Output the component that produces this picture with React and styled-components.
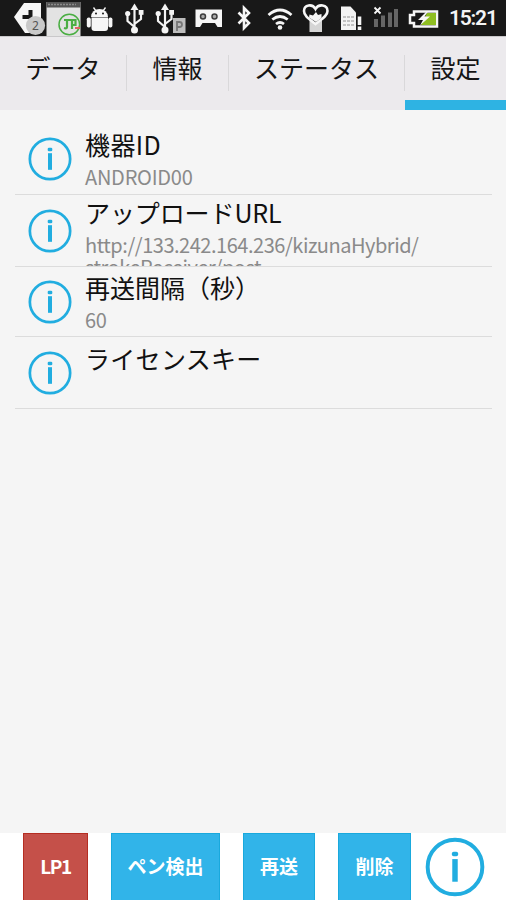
import React from 'react'
import styled, { createGlobalStyle } from 'styled-components'

const tabs = [
    { label: 'データ', width: 127 },
    { label: '情報', width: 102 },
    { label: 'ステータス', width: 176 },
    { label: '設定', width: 101, active: true },
]

const settings = [
    { title: '機器ID', value: 'ANDROID00', height: 72, top: 3, spacing: -0.25, titleSpacing: 0.4 },
    {
        title: 'アップロードURL',
        value: 'http://133.242.164.236/kizunaHybrid/ strokeReceiver/post',
        height: 72,
        top: -1,
        spacing: -0.47,
        titleSpacing: -0.1,
    },
    { title: '再送間隔（秒）', value: '60', height: 70, top: 2, spacing: -0.3, titleSpacing: 0 },
    { title: 'ライセンスキー', value: '', height: 72, top: 3, spacing: 0, titleSpacing: 0.3 },
]

const InfoIcon = ({ size, stroke }) => (
    <InfoSvg $size={size} viewBox="0 0 44 44">
        <circle
            cx="22"
            cy="22"
            r={21.5 - stroke / 2}
            fill="none"
            stroke="#21ade0"
            strokeWidth={stroke}
        />
        <rect x="19.7" y="10.8" width="4.6" height="3.4" rx="1.3" fill="#21ade0" />
        <rect x="20" y="16.2" width="4" height="16.6" fill="#21ade0" />
    </InfoSvg>
)

const UsbPath = () => (
    <g fill="none" stroke="#f4f4f4" strokeWidth="2.2">
        <path d="M10 7v21M10 26l-7-6v-6M10 23l6.5-5v-5" />
        <g fill="#f4f4f4" stroke="none">
            <path d="M10 2.5l4 6.5H6z" />
            <circle cx="3.2" cy="12.5" r="2.6" />
            <rect x="14.2" y="9" width="4.8" height="4.8" />
            <circle cx="10" cy="29" r="3.5" />
        </g>
    </g>
)

const StatusIcons = () => (
    <IconStrip viewBox="0 0 440 36">
        {/* 矢印と通知件数 */}
        <path d="M24 3h17v30H25L14 17z" fill="#f6f6f6" />
        <path d="M28.5 10h4v9h-10v-4h6z" fill="#181818" />
        <circle cx="35.5" cy="25.5" r="9.6" fill="#c9c9c9" />
        <text x="35.5" y="30" textAnchor="middle" fontSize="12" fill="#555">
            2
        </text>
        {/* アプリのサムネイル */}
        <rect x="46.5" y="2" width="34" height="34" fill="#e3e3e3" />
        <rect x="46.5" y="2" width="34" height="5.5" fill="#555" />
        <path d="M48 4.5h28" stroke="#8b8b8b" strokeWidth="1.4" strokeDasharray="2 1" />
        <g fill="none" stroke="#4aae43">
            <circle cx="69.3" cy="24.5" r="10.3" strokeWidth="1.5" />
            <path d="M67 20v7q0 2-3 1M72 29V20h3.5v5h-3M64 20h8" strokeWidth="2.2" />
        </g>
        <path d="M75 28h5" stroke="#df6262" strokeWidth="2" />
        {/* ドロイド */}
        <g fill="#f6f6f6">
            <path d="M91 17a8.5 8 0 0 1 17 0z" />
            <path d="M91.5 17.5h16.5v10.5q0 3-3 3H94.5q-3 0-3-3z" />
            <rect x="86.8" y="17.5" width="4" height="10" rx="1.8" />
            <rect x="108.4" y="17.5" width="4" height="10" rx="1.8" />
        </g>
        <path d="M93.5 7.5l2.5 3.5M105.5 7.5l-2.5 3.5" stroke="#f6f6f6" strokeWidth="1.3" />
        <circle cx="96" cy="13.5" r="1" fill="#181818" />
        <circle cx="103" cy="13.5" r="1" fill="#181818" />
        <g transform="translate(124.5 1)">
            <UsbPath />
        </g>
        <g transform="translate(155 1)">
            <UsbPath />
        </g>
        <rect x="173" y="18" width="12.5" height="15" fill="#bdbdbd" />
        <path
            d="M177 31v-9h2.5a2.4 2.4 0 0 1 0 5H177"
            fill="none"
            stroke="#777"
            strokeWidth="1.8"
        />
        {/* 留守番電話 */}
        <path d="M195.5 9.5h26.5v17.5h-4.5l-2.5-4h-12.5l-2.5 4h-4.5z" fill="#f6f6f6" />
        <circle cx="203" cy="16.5" r="2.5" fill="#aaa" stroke="#3d3d3d" strokeWidth="1.5" />
        <circle cx="214.5" cy="16.5" r="2.5" fill="#aaa" stroke="#3d3d3d" strokeWidth="1.5" />
        {/* Bluetooth */}
        <path
            d="M238.5 12.5l10.5 10.5-5 5V8l5 5-10.5 10.5"
            fill="none"
            stroke="#f6f6f6"
            strokeWidth="2.6"
        />
        {/* Wi-Fi */}
        <g fill="none" stroke="#f6f6f6" strokeWidth="2.8">
            <path d="M268.5 15q11.5-10 23 0" />
            <path d="M272.3 19.5q7.7-6 15.4 0" />
            <path d="M276 24q4-3 8 0" />
        </g>
        <circle cx="280" cy="27.5" r="2.3" fill="#f6f6f6" />
        {/* ハート */}
        <rect x="309.5" y="20" width="12.5" height="12" fill="#d5d5d5" />
        <path
            d="M315.5 24C309 19 304 16 304 11C304 4.5 312.5 3.5 315.5 9C318.5 3.5 327.5 4.5 327.5 11C327.5 16 322 19 315.5 24z"
            fill="#181818"
            stroke="#f6f6f6"
            strokeWidth="2.6"
        />
        <path d="M309.5 14.5l3.5 1 3-3.5 2 3 3.5-1v4l-5.5 4-7-4.5z" fill="#f6f6f6" />
        {/* SDカード */}
        <path d="M341 6.5h9.5l5.5 6V30h-15z" fill="#f3f3f3" />
        <path
            d="M343 17h11M343 21h11M343 25h11"
            stroke="#b3b3b3"
            strokeWidth="1.3"
            strokeDasharray="3 1"
        />
        <path d="M359.5 16.5v8.5M359.5 26.5v3.5" stroke="#181818" strokeWidth="5" />
        <path d="M359.5 16.5v8.5M359.5 26.5v3.5" stroke="#f6f6f6" strokeWidth="3.6" />
        {/* 電波 */}
        <path d="M374.5 7.5l6 6M380.5 7.5l-6 6" stroke="#f6f6f6" strokeWidth="1.8" />
        <g fill="#666">
            <rect x="374" y="19" width="4" height="8" />
            <rect x="381" y="15.5" width="4" height="11.5" />
            <rect x="388" y="12.5" width="4" height="14.5" />
            <rect x="394" y="9" width="4" height="18" />
        </g>
        {/* バッテリー */}
        <path
            d="M414 11.5h23v15h-23v-3.5h-4v-8h4z"
            fill="#181818"
            stroke="#f6f6f6"
            strokeWidth="2.5"
        />
        <path d="M427 13h9v12H421z" fill="#8fbe22" />
        <path d="M427 11l-9 9h5l-3 5.5 10-9h-5.5l4-5.5z" fill="#f6f6f6" />
    </IconStrip>
)

const App = () => {
    return (
        <Screen>
            <GlobalStyle />
            <StatusBar>
                <StatusIcons />
                <Clock>15:21</Clock>
            </StatusBar>
            <TabBar>
                {tabs.map((tab) => (
                    <Tab key={tab.label} $width={tab.width} $active={tab.active}>
                        <span>{tab.label}</span>
                    </Tab>
                ))}
            </TabBar>
            <SettingList>
                {settings.map((item) => (
                    <SettingRow key={item.title} $height={item.height}>
                        <IconCell>
                            <InfoIcon size={44} stroke={2.7} />
                        </IconCell>
                        <SettingText $top={item.top}>
                            <SettingTitle $spacing={item.titleSpacing}>
                                {item.title}
                            </SettingTitle>
                            <SettingValue $spacing={item.spacing}>{item.value}</SettingValue>
                        </SettingText>
                    </SettingRow>
                ))}
            </SettingList>
            <Footer>
                <DangerButton $width={65}>LP1</DangerButton>
                <Button $width={109}>ペン検出</Button>
                <Button $width={72}>再送</Button>
                <Button $width={73}>削除</Button>
                <InfoButton>
                    <InfoIcon size={60} stroke={2.9} />
                </InfoButton>
            </Footer>
        </Screen>
    )
}

const GlobalStyle = createGlobalStyle`
    body {
        margin: 0;
        font-family: 'Noto Sans CJK JP', sans-serif;
    }

    * {
        box-sizing: border-box;
    }
`

const Screen = styled.div`
    display: flex;
    flex-direction: column;
    width: 506px;
    height: 900px;
    overflow: hidden;
    background-color: #f5f5f5;
`

const StatusBar = styled.header`
    display: flex;
    flex: none;
    height: 36px;
    background-color: #181818;
`

const IconStrip = styled.svg`
    flex: none;
    width: 440px;
    height: 36px;
    font-family: 'Noto Sans', sans-serif;
`

const Clock = styled.time`
    padding-left: 9px;
    font-family: Roboto, sans-serif;
    font-size: 21px;
    font-weight: 600;
    line-height: 37px;
    letter-spacing: -1.2px;
    color: #f4f4f4;
    white-space: nowrap;
`

const TabBar = styled.nav`
    display: flex;
    flex: none;
    height: 74px;
    background-color: #eceaed;
    border-top: 1px solid #c9c8ca;
`

const Tab = styled.a`
    display: flex;
    flex-direction: column;
    width: ${(props) => props.$width}px;
    border-bottom: ${(props) => (props.$active ? '10px solid #2eb3e3' : '0')};

    span {
        height: 36px;
        margin-top: 18px;
        border-right: ${(props) => (props.$active ? '0' : '1px solid #d9d8da')};
        font-size: 25px;
        line-height: 24px;
        text-align: center;
        color: #151515;
    }
`

const SettingList = styled.main`
    flex: 1;
    padding: 13px 14px 0 15px;
`

const SettingRow = styled.div`
    display: flex;
    height: ${(props) => props.$height}px;
    overflow: hidden;
    border-bottom: 1px solid #dcdcdc;
`

const IconCell = styled.div`
    display: flex;
    align-items: center;
    justify-content: center;
    flex: none;
    width: 70px;
`

const SettingText = styled.div`
    width: 345px;
    margin-top: ${(props) => props.$top}px;
`

const SettingTitle = styled.div`
    height: 36px;
    font-size: 25px;
    line-height: 37px;
    letter-spacing: ${(props) => props.$spacing}px;
    color: #111;
    white-space: nowrap;
`

const SettingValue = styled.div`
    padding-top: 4px;
    font-size: 20px;
    line-height: 22px;
    letter-spacing: ${(props) => props.$spacing}px;
    color: #8a8a8a;
`

const InfoSvg = styled.svg`
    display: block;
    width: ${(props) => props.$size}px;
    height: ${(props) => props.$size}px;
`

const Footer = styled.footer`
    display: flex;
    flex: none;
    gap: 23px;
    height: 67px;
    padding-left: 23px;
    background-color: #fff;
`

const Button = styled.button`
    flex: none;
    width: ${(props) => props.$width}px;
    padding: 0 0 3px;
    border: 1px solid #19a9dd;
    border-bottom: 0;
    background-color: #31b4e9;
    font-family: inherit;
    font-size: 19px;
    font-weight: 700;
    color: #fff;
`

const DangerButton = styled(Button)`
    border-color: #b52d22;
    background-color: #c55049;
    letter-spacing: -1.5px;
`

const InfoButton = styled.a`
    display: flex;
    align-items: center;
    margin-left: -9px;
`

export default App
